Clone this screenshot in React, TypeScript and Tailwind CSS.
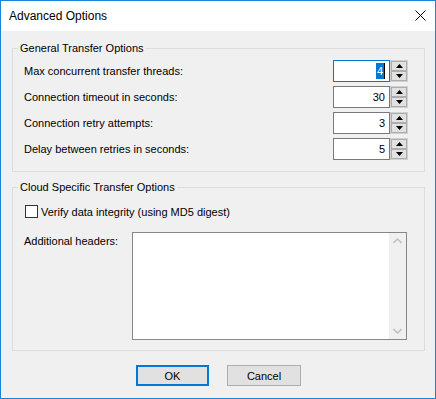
const SpinBox: React.FC<{ value: string; focused?: boolean }> = ({
  value,
  focused,
}) => (
  <div className="flex h-[22px]">
    <div
      className={`w-[57px] h-[22px] bg-white border flex items-center justify-end pr-[4px] ${
        focused ? 'border-[#0078d7]' : 'border-[#7a7a7a]'
      }`}
    >
      {focused ? (
        <span className="flex items-center">
          <span className="bg-[#0078d7] text-white leading-[16px] px-[1px]">
            {value}
          </span>
          <span className="w-[1px] h-[16px] bg-black" />
        </span>
      ) : (
        <span className="leading-[16px]">{value}</span>
      )}
    </div>
    <div className="w-[18px] h-[22px] flex flex-col border border-[#d0d0d0]">
      <div className="flex-1 border border-[#adadad] bg-[#e1e1e1] flex items-center justify-center">
        <svg width="7" height="4" viewBox="0 0 7 4">
          <polygon points="3.5,0 7,4 0,4" fill="#000" />
        </svg>
      </div>
      <div className="flex-1 border border-[#adadad] bg-[#e1e1e1] flex items-center justify-center">
        <svg width="7" height="4" viewBox="0 0 7 4">
          <polygon points="0,0 7,0 3.5,4" fill="#000" />
        </svg>
      </div>
    </div>
  </div>
);

const rows = [
  { label: 'Max concurrent transfer threads:', value: '4', focused: true },
  { label: 'Connection timeout in seconds:', value: '30' },
  { label: 'Connection retry attempts:', value: '3' },
  { label: 'Delay between retries in seconds:', value: '5' },
];

const App: React.FC = () => (
  <div className="w-[436px] h-[399px] border border-[#1883d7] bg-[#f0f0f0] flex flex-col text-[11px] text-black font-['Liberation_Sans',Arial,sans-serif]">
    <div className="h-[30px] bg-white flex items-center justify-between pl-[8px] pr-[9px]">
      <span className="text-[12px] leading-[16px]">Advanced Options</span>
      <svg width="11" height="11" viewBox="0 0 11 11" className="mb-[1px]">
        <path d="M0.5 0.5 L10.5 10.5 M10.5 0.5 L0.5 10.5" stroke="#000" strokeWidth="1" />
      </svg>
    </div>

    <div className="flex-1 flex flex-col pl-[11px] pr-[10px] pt-[9px]">
      <fieldset className="border border-[#dcdcdc] m-0 p-0">
        <legend className="ml-[5px] px-[2px] leading-[16px]">General Transfer Options</legend>
        <div className="flex flex-col gap-[4px] pt-[4px] pb-[11px] pl-[11px] pr-[16px]">
          {rows.map(row => (
            <div key={row.label} className="flex items-center justify-between h-[22px]">
              <span className="leading-[16px]">{row.label}</span>
              <SpinBox value={row.value} focused={row.focused} />
            </div>
          ))}
        </div>
      </fieldset>

      <fieldset className="border border-[#dcdcdc] m-0 p-0 mt-[7px]">
        <legend className="ml-[5px] px-[2px] leading-[16px]">Cloud Specific Transfer Options</legend>
        <div className="flex flex-col pt-[10px] pb-[10px]">
          <div className="flex items-center gap-[3px] pl-[12px] h-[13px]">
            <span className="w-[13px] h-[13px] border border-[#333333] bg-white" />
            <span className="leading-[16px]">Verify data integrity (using MD5 digest)</span>
          </div>
          <div className="flex mt-[14px] pl-[11px]">
            <span className="w-[108px] leading-[16px] pt-[1px]">Additional headers:</span>
            <div className="w-[275px] h-[108px] border border-[#828790] bg-white flex">
              <div className="flex-1" />
              <div className="w-[17px] bg-[#f0f0f0] flex flex-col justify-between items-center py-[5px]">
                <svg width="9" height="6" viewBox="0 0 9 6">
                  <path d="M0.5 5 L4.5 1 L8.5 5" stroke="#c2c2c2" strokeWidth="1.6" fill="none" />
                </svg>
                <svg width="9" height="6" viewBox="0 0 9 6">
                  <path d="M0.5 1 L4.5 5 L8.5 1" stroke="#c2c2c2" strokeWidth="1.6" fill="none" />
                </svg>
              </div>
            </div>
          </div>
        </div>
      </fieldset>

      <div className="flex justify-center gap-[18px] mt-[14px]">
        <button className="w-[73px] h-[21px] border-2 border-[#0078d7] bg-[#e1e1e1] leading-[16px]">
          OK
        </button>
        <button className="w-[74px] h-[21px] border border-[#adadad] bg-[#e1e1e1] leading-[16px]">
          Cancel
        </button>
      </div>
    </div>
  </div>
);

export default App;
